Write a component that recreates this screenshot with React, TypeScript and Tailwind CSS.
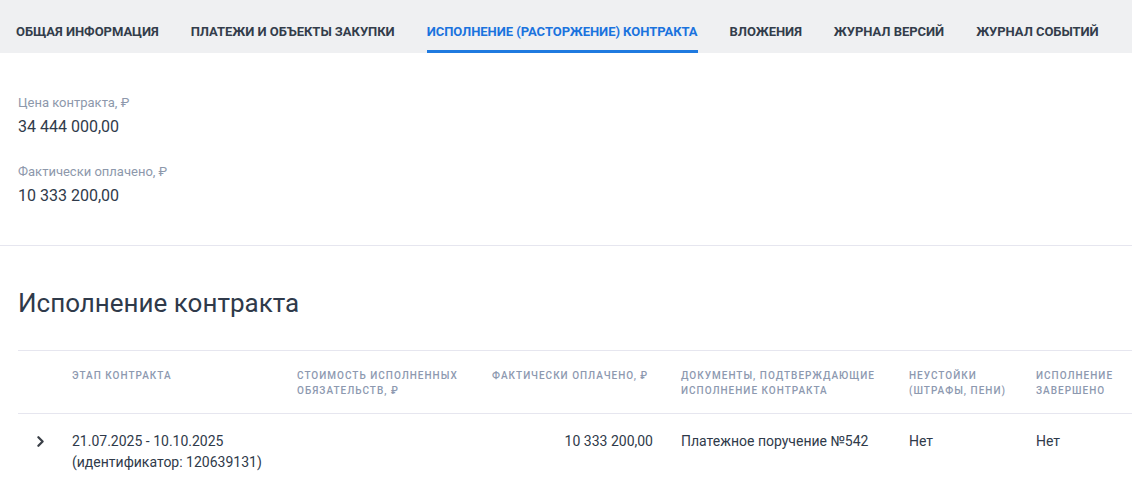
import { ChevronRight } from "lucide-react";

const tabs = [
  "Общая информация",
  "Платежи и объекты закупки",
  "Исполнение (расторжение) контракта",
  "Вложения",
  "Журнал версий",
  "Журнал событий",
];

const cols = "grid grid-cols-[42px_225px_195px_189px_228px_127px_1fr]";

function Field({ label, value }: { label: string; value: string }) {
  return (
    <div>
      <div className="text-[13px] leading-[18px] text-[#8d98ab]">{label}</div>
      <div className="mt-[3px] text-[16px] leading-[24px] text-[#2f3a4a]">{value}</div>
    </div>
  );
}

export default function App() {
  return (
    <div className="min-h-[488px] bg-white font-['Roboto',sans-serif]">
      <div className="flex h-[53px] bg-[#eff0f2] px-[16px] gap-[32px]">
        {tabs.map((t, i) => (
          <div
            key={t}
            className={
              "pt-[24px] pb-[10px] border-b-[3px] text-[13px] leading-[16px] font-bold uppercase tracking-[-0.04px] whitespace-nowrap " +
              (i === 2 ? "border-[#1f7ae0] text-[#1a73de]" : "border-transparent text-[#333d4b]")
            }
          >
            {t}
          </div>
        ))}
      </div>

      <div className="px-[18px] pt-[41px] pb-[37px] flex flex-col gap-[24px] border-b border-[#e6e6ef]">
        <Field label="Цена контракта, ₽" value="34 444 000,00" />
        <Field label="Фактически оплачено, ₽" value="10 333 200,00" />
      </div>

      <div className="pl-[18px]">
        <h2 className="mt-[41px] text-[26px] leading-[32px] font-normal text-[#2f3a4a]">
          Исполнение контракта
        </h2>

        <div className="mt-[31px] border-t border-[#e6e6ef]">
          <div className={cols + " border-b border-[#e6e6ef] text-[10px] leading-[15px] font-medium uppercase tracking-[1px] text-[#8d99b0]"}>
            <div />
            <div className="pl-[12px] pt-[17px] pb-[15px]">Этап контракта</div>
            <div className="pl-[12px] pt-[17px] pb-[15px]">Стоимость исполненных<br />обязательств, ₽</div>
            <div className="pl-[12px] pt-[17px] pb-[15px]">Фактически оплачено, ₽</div>
            <div className="pl-[12px] pt-[17px] pb-[15px]">Документы, подтверждающие<br />исполнение контракта</div>
            <div className="pl-[12px] pt-[17px] pb-[15px]">Неустойки<br />(штрафы, пени)</div>
            <div className="pl-[12px] pt-[17px] pb-[15px]">Исполнение<br />завершено</div>
          </div>
          <div className={cols + " text-[14px] leading-[21px] text-[#2f3a4a]"}>
            <div className="pt-[19px] pl-[14px]">
              <ChevronRight size={17} strokeWidth={3.2} className="text-[#3a3f47]" />
            </div>
            <div className="pl-[12px] pt-[17px]">
              21.07.2025 - 10.10.2025
              <br />
              (идентификатор: 120639131)
            </div>
            <div />
            <div className="pr-[16px] pt-[17px] text-right">10 333 200,00</div>
            <div className="pl-[12px] pt-[17px]">Платежное поручение №542</div>
            <div className="pl-[12px] pt-[17px]">Нет</div>
            <div className="pl-[12px] pt-[17px]">Нет</div>
          </div>
        </div>
      </div>
    </div>
  );
}
